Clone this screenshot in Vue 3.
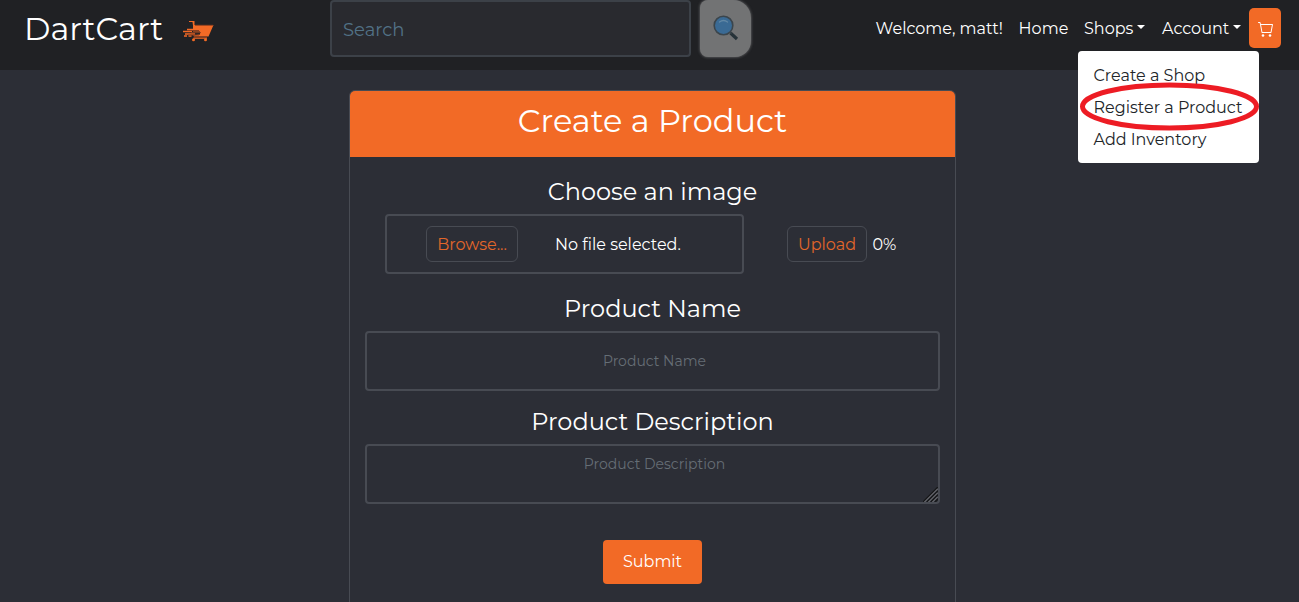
<script setup>
import { ref } from 'vue'

const shopLinks = ['Create a Shop', 'Register a Product', 'Add Inventory']
const search = ref('')
const name = ref('')
const description = ref('')
</script>

<template>
  <div class="page">
    <header class="navbar">
      <a class="brand">
        <span class="brand-name">DartCart</span>
        <svg class="brand-icon" width="31" height="22" viewBox="0 0 31 22">
          <path fill="#f26a26" d="M6 1h5.500v4H30.500L25.500 16.500H11l-1-1 7-1v-3H10V5.500L9.500 2H6z" />
          <path stroke="#f26a26" stroke-width="1.300" d="M4 9.500h8M0 11.500h9M2 14h10M1 16h3M5.500 16h3M10.500 18.200H24" />
          <path stroke="#8a3f20" stroke-width="1" d="M4 10.500h12M8 12.700h10M5 15h11M11 17h13M12 5.300h18" />
          <circle cx="10.500" cy="19.700" r="1.500" fill="#f26a26" />
          <circle cx="22.500" cy="19.700" r="1.500" fill="#f26a26" />
        </svg>
      </a>
      <form class="search" @submit.prevent>
        <input v-model="search" class="search-input" placeholder="Search" />
        <button class="search-button" aria-label="Search">
          <svg width="28" height="28" viewBox="0 0 28 28">
            <path d="M18.500 19l6.500 6" stroke="#263238" stroke-width="3.200" />
            <path d="M17 17l2.500 2.500" stroke="#3d464b" stroke-width="1.500" />
            <circle cx="11.500" cy="11.500" r="9.300" fill="#3a6a94" stroke="#3b454c" stroke-width="1.600" />
            <path d="M7.500 8q4-3 8 0" fill="none" stroke="#6288a5" stroke-width="1.300" stroke-linecap="round" />
          </svg>
        </button>
      </form>
      <nav class="links">
        <a class="link welcome">Welcome, matt!</a>
        <a class="link home">Home</a>
        <div class="link shops">
          <span>Shops</span><i class="caret"></i>
          <div class="menu">
            <a v-for="item in shopLinks" :key="item" class="menu-item">{{ item }}</a>
            <svg class="highlight" width="181" height="49" viewBox="0 0 181 49">
              <ellipse cx="90.500" cy="24.500" rx="87" ry="21.500" fill="none" stroke="#ed1c24" stroke-width="5" />
            </svg>
          </div>
        </div>
        <div class="link account"><span>Account</span><i class="caret"></i></div>
        <button class="cart" aria-label="Cart">
          <svg width="16" height="16" viewBox="0 0 16 16" fill="#fff">
            <path d="M0 1.500A.5.500 0 0 1 .5 1H2a.5.500 0 0 1 .485.379L2.890 3H14.500a.5.500 0 0 1 .491.592l-1.500 8A.5.500 0 0 1 13 12H4a.5.500 0 0 1-.491-.408L2.010 3.607 1.610 2H.5a.5.500 0 0 1-.5-.5zM3.102 4l1.313 7h8.170l1.313-7H3.102z" />
            <circle cx="5" cy="14.500" r="1.300" /><circle cx="12" cy="14.500" r="1.300" />
          </svg>
        </button>
      </nav>
    </header>

    <main class="card">
      <h1 class="card-header">Create a Product</h1>
      <form class="card-body" @submit.prevent>
        <h2 class="label">Choose an image</h2>
        <div class="upload-row">
          <div class="file">
            <button class="outline browse">Browse...</button>
            <span class="file-name">No file selected.</span>
          </div>
          <button class="outline upload">Upload</button>
          <span class="percent">0%</span>
        </div>
        <h2 class="label">Product Name</h2>
        <input v-model="name" class="field name-field" placeholder="Product Name" />
        <h2 class="label">Product Description</h2>
        <div class="area">
          <textarea v-model="description" class="field description-field" placeholder="Product Description"></textarea>
          <svg class="grip" width="15" height="15" viewBox="0 0 15 15">
            <path d="M0 15L15 0M4 15L15 4M8 15l7-7M12 15l3-3" stroke="#17181a" stroke-width="1.500" />
            <path d="M1.500 15L15 1.500M5.500 15L15 5.500M9.500 15L15 9.500" stroke="#a3a5a8" stroke-width=".8" />
          </svg>
        </div>
        <button class="submit">Submit</button>
      </form>
    </main>
  </div>
</template>

<style>
body { margin: 0; background: #2c2e36; }
</style>

<style scoped>
* { box-sizing: border-box; }
.page {
  height: 602px;
  overflow: hidden;
  background: #2c2e36;
  color: #fff;
  font: 400 16px/24px Montserrat, Inter, sans-serif;
}
button, input, textarea { font: inherit; margin: 0; outline: none; }
.navbar { display: flex; height: 70px; background: #202124; }
.brand { display: flex; width: 330px; padding-left: 24px; }
.brand-name { width: 159px; font-size: 32px; line-height: 58px; white-space: nowrap; }
.brand-icon { margin-top: 20px; }
.search { display: flex; width: 422px; gap: 9px; }
.search-input {
  width: 361px; height: 57px; padding: 3px 11px 0;
  border: 2px solid #3c4148; border-radius: 4px;
  background: #292a2f; color: #fff; font-size: 18px;
}
.search-input::placeholder { color: #527287; opacity: 1; }
.search-button {
  display: flex; width: 51px; height: 57px; padding: 14px 0 0 12px;
  border: 0; border-radius: 8px 18px 16px 8px;
  background: #727374; box-shadow: 0 0 3px #77787a;
}
.links { display: flex; flex: 1; padding: 8px 18px 0 124px; line-height: 42px; }
.link { position: relative; flex: none; height: 40px; white-space: nowrap; }
.welcome { width: 143px; margin-left: -.4px; }
.home { width: 65.400px; }
.shops { width: 78px; }
.account { width: 87px; }
.shops, .account { display: flex; }
.caret { width: 0; height: 0; margin: 17px 0 0 4px; border: 4.800px solid transparent; border-top-color: #fff; border-bottom: 0; }
.menu {
  position: absolute; z-index: 2; top: 43px; left: -6px;
  display: flex; flex-direction: column;
  width: 181px; height: 112px; padding: 8px 15.500px;
  border-radius: 4px; background: #fff; color: #212529;
}
.menu-item { height: 32px; line-height: 33px; white-space: nowrap; }
.highlight { position: absolute; left: 1px; top: 31px; }
.cart {
  display: flex; align-items: center; justify-content: center;
  width: 32px; height: 40px; padding: 1px 0 0 1px; border: 0; border-radius: 5px; background: #f26a26;
}
.card {
  width: 607px; height: 530px; margin: 20px 0 0 349px;
  border: 1px solid #484b53; border-radius: 6px;
}
.card-header {
  height: 66px; margin: 0; border-radius: 5px 5px 0 0; background: #f26a26;
  font-size: 32px; line-height: 60px; font-weight: 400; text-align: center;
}
.card-body { display: flex; flex-direction: column; align-items: center; padding: 16px 15px 0; }
.label { margin: 0; height: 37px; font-size: 24px; line-height: 37px; font-weight: 400; white-space: nowrap; }
.upload-row { display: flex; align-items: center; align-self: stretch; height: 60px; margin: 4px 0 16px 20px; }
.file { display: flex; align-items: center; width: 359px; height: 60px; padding-left: 39px; border: 2px solid #484b53; border-radius: 4px; }
.outline { flex: none; height: 36px; padding: 2px 0 0; border: 1px solid #484b53; border-radius: 6px; background: transparent; color: #e2662a; white-space: nowrap; }
.browse { width: 92px; }
.file-name { margin-left: 37px; padding-top: 2px; white-space: nowrap; }
.upload { width: 80px; margin-left: 43px; }
.percent { margin-left: 5.500px; padding-top: 2px; }
.field {
  display: block; width: 575px; height: 60px; padding: 7px 10px 7px 14px;
  border: 2px solid #484b53; border-radius: 4px; background: transparent;
  color: #fff; font-size: 14px; text-align: center; resize: none; overflow: hidden;
}
.field::placeholder { color: #6c757d; opacity: .9; }
.name-field { margin: 4px 0 12px; }
.area { position: relative; height: 60px; margin-top: 4px; }
.description-field { padding-top: 6px; }
.grip { position: absolute; right: 2px; bottom: 2px; }
.submit { width: 99px; height: 44px; margin-top: 36px; padding: 0; border: 0; border-radius: 4px; background: #f26a26; color: #fff; }
</style>
